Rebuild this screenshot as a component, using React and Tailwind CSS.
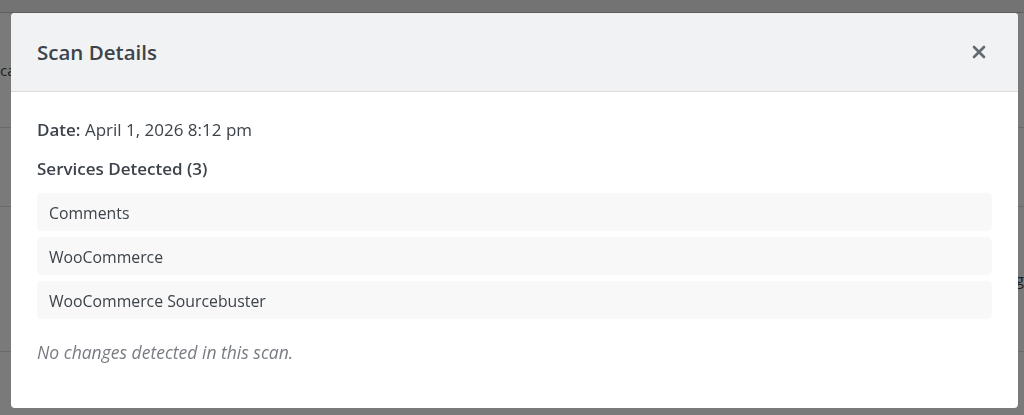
import React from 'react';

const services = ['Comments', 'WooCommerce', 'WooCommerce Sourcebuster'];

const ScanDetailsModal = ({ date, items, onClose }) => (
    <div className="fixed inset-0 bg-black/[0.52]">
        <div className="ml-[11px] mt-[13px] w-[1007px] h-[395px] bg-white rounded-[4px] overflow-hidden flex flex-col">
            <div className="h-[79px] shrink-0 bg-[#f1f2f4] border-b border-[#dcdcde] flex items-center justify-between pl-[26px] pr-[32px]">
                <h2 className="text-[20.5px] font-semibold text-[#3c434a]">Scan Details</h2>
                <button onClick={onClose} className="text-[#646970] -mt-[1px]">
                    <svg width="14" height="14" viewBox="0 0 14 14" fill="none" stroke="currentColor" strokeWidth="2.6" strokeLinecap="round">
                        <path d="M2 2 L12 12 M12 2 L2 12" />
                    </svg>
                </button>
            </div>
            <div className="px-[26px] pt-[26px] text-[#3c434a]">
                <p className="text-[17px] leading-6">
                    <span className="font-semibold">Date:</span> {date}
                </p>
                <h3 className="mt-[15px] text-[17px] leading-6 font-semibold">Services Detected ({items.length})</h3>
                <div className="mt-[12px] flex flex-col gap-[6px]">
                    {items.map((s) => (
                        <div key={s} className="h-[38px] flex items-center px-[12px] pt-[3px] bg-[#f8f8f8] rounded-[5px] text-[15.8px]">
                            {s}
                        </div>
                    ))}
                </div>
                <p className="mt-[21px] text-[17.5px] leading-6 italic text-[#787c82]">No changes detected in this scan.</p>
            </div>
        </div>
    </div>
);

export default function App() {
    return (
        <div className="w-[1024px] h-[415px] overflow-hidden bg-white font-['Open_Sans','Noto_Sans',sans-serif] text-[#3c434a]">
            {/* page behind the overlay */}
            <div className="h-[13px] bg-[#f0f0f1] border-b border-[#c3c4c7]" />
            <div className="h-[115px] border-b border-[#dcdcde] flex items-center text-[15px]">ca</div>
            <div className="h-[79px] border-b border-[#dcdcde]" />
            <div className="h-[145px] border-b border-[#dcdcde] flex items-center justify-end text-[15px]">ag</div>
            <div className="h-[60px] flex items-end pl-[278px] text-[15px]">Detected</div>

            <ScanDetailsModal date="April 1, 2026 8:12 pm" items={services} onClose={() => {}} />
        </div>
    );
}
